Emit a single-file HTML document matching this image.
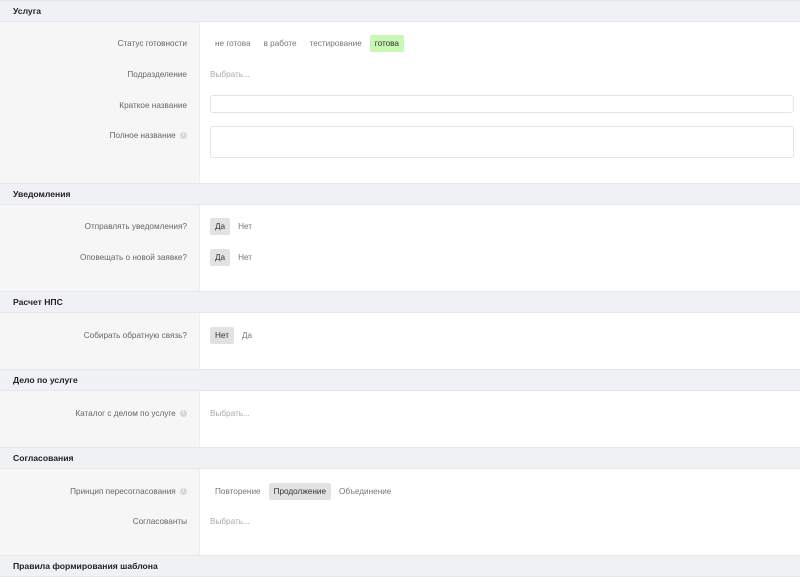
<!DOCTYPE html>
<html><head><meta charset="utf-8"><style>
*{box-sizing:border-box;margin:0;padding:0}
body{width:800px;height:572px;overflow:hidden;background:#fff;font-family:"Liberation Sans","DejaVu Sans",sans-serif;font-size:8.2px;color:#666}
.h{height:22px;background:#f0f1f4;border-top:1px solid #e6e7ea;border-bottom:1px solid #e6e7ea;font-weight:bold;color:#222;font-size:8.6px;line-height:20px;padding-left:13px}
.b{position:relative;display:flex}
.l{width:200px;background:#f6f6f6;border-right:1px solid #eee}
.r{flex:1}
.row{position:absolute;left:0;right:0;height:18px;display:flex;align-items:center}
.lab{width:187px;text-align:right;color:#666}
.v{position:absolute;left:210px;display:flex;align-items:center;height:18px}
.o{padding:0 5px;height:17px;line-height:17px;border-radius:2px;color:#777;margin-right:3px}
.sel{background:#e2e2e2;color:#333}
.grn{background:#c9f7b4;color:#333}
.ph{color:#aaa;position:absolute;left:210px}
.i{display:inline-block;width:7px;height:7px;border-radius:50%;background:#d8d8d8;color:#fff;font-size:6px;line-height:7px;text-align:center;margin-left:2px;vertical-align:middle}
.inp{position:absolute;left:210px;width:584px;border:1px solid #e4e4e4;border-radius:3px;background:#fff}
</style></head><body>

<div class="h">Услуга</div>
<div class="b" style="height:161px"><div class="l"></div><div class="r"></div>
 <div class="row" style="top:12px"><div class="lab">Статус готовности</div></div>
 <div class="v" style="top:12px;left:210px"><span class="o">не готова</span><span class="o">в работе</span><span class="o">тестирование</span><span class="o grn">готова</span></div>
 <div class="row" style="top:43px"><div class="lab">Подразделение</div><span class="ph">Выбрать...</span></div>
 <div class="row" style="top:74px"><div class="lab">Краткое название</div></div>
 <div class="inp" style="top:73px;height:18px"></div>
 <div class="row" style="top:104px"><div class="lab">Полное название <span class="i">i</span></div></div>
 <div class="inp" style="top:104px;height:32px"></div>
</div>

<div class="h">Уведомления</div>
<div class="b" style="height:86px"><div class="l"></div><div class="r"></div>
 <div class="row" style="top:12px"><div class="lab">Отправлять уведомления?</div></div>
 <div class="v" style="top:12px"><span class="o sel">Да</span><span class="o">Нет</span></div>
 <div class="row" style="top:43px"><div class="lab">Оповещать о новой заявке?</div></div>
 <div class="v" style="top:43px"><span class="o sel">Да</span><span class="o">Нет</span></div>
</div>

<div class="h">Расчет НПС</div>
<div class="b" style="height:56px"><div class="l"></div><div class="r"></div>
 <div class="row" style="top:13px"><div class="lab">Собирать обратную связь?</div></div>
 <div class="v" style="top:13px"><span class="o sel">Нет</span><span class="o">Да</span></div>
</div>

<div class="h">Дело по услуге</div>
<div class="b" style="height:56px"><div class="l"></div><div class="r"></div>
 <div class="row" style="top:13px"><div class="lab">Каталог с делом по услуге <span class="i">i</span></div><span class="ph">Выбрать...</span></div>
</div>

<div class="h">Согласования</div>
<div class="b" style="height:86px"><div class="l"></div><div class="r"></div>
 <div class="row" style="top:13px"><div class="lab">Принцип пересогласования <span class="i">i</span></div></div>
 <div class="v" style="top:13px"><span class="o">Повторение</span><span class="o sel">Продолжение</span><span class="o">Объединение</span></div>
 <div class="row" style="top:43px"><div class="lab">Согласованты</div><span class="ph">Выбрать...</span></div>
</div>

<div class="h">Правила формирования шаблона</div>
</body></html>
